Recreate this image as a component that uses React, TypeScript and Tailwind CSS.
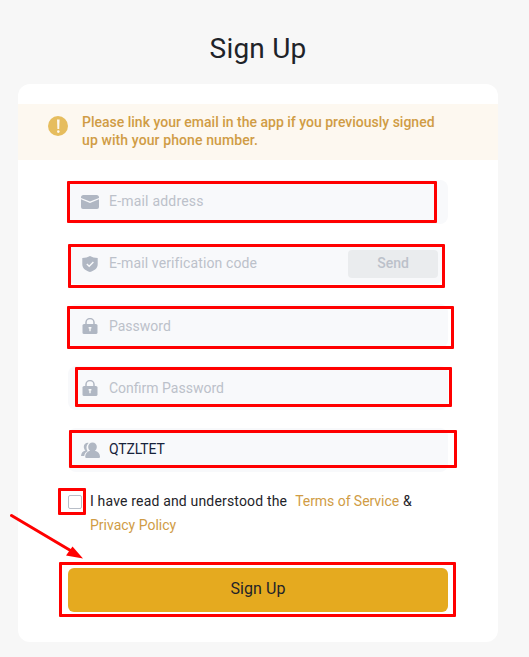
import React, { useState } from 'react';

type IconProps = { className?: string };

const MailIcon = ({ className }: IconProps) => (
  <svg viewBox="0 0 18 14" className={className} fill="currentColor">
    <path d="M2.500 0h13A2.500 2.500 0 0 1 18 2.500v.4L9 6.500 0 2.900v-.4A2.500 2.500 0 0 1 2.500 0z" />
    <path d="M0 4.300 9 7.900l9-3.600V12a2 2 0 0 1-2 2H2a2 2 0 0 1-2-2z" />
  </svg>
);

const ShieldIcon = ({ className }: IconProps) => (
  <svg viewBox="0 0 16 16" className={className} fill="currentColor">
    <path d="M8 0c2.200 1.300 4.600 1.900 7.700 2v6.200c0 4-3.400 6.500-7.700 7.800C3.700 14.700.3 12.200.3 8.200V2C3.400 1.900 5.800 1.300 8 0z" />
    <path d="m4.800 8 2.400 2.300 4.200-4.200" fill="none" stroke="#f8f9fb" strokeWidth="1.400" />
  </svg>
);

const LockIcon = ({ className }: IconProps) => (
  <svg viewBox="0 0 16 16" className={className} fill="currentColor">
    <path d="M4 7V4.600a4 4 0 0 1 8 0V7" fill="none" stroke="currentColor" strokeWidth="1.500" />
    <rect x="0.500" y="6" width="15" height="10" rx="1.600" />
    <path d="M8 9v4.300M6.600 9.800h2.800" fill="none" stroke="#f8f9fb" strokeWidth="1.400" />
  </svg>
);

const UsersIcon = ({ className }: IconProps) => (
  <svg viewBox="0 0 20 17" className={className} fill="currentColor">
    <path d="M7.500.9C4.700.6 2.700 2.600 2.800 5c.1 1.600.7 2.800 1.700 3.500C1.800 9.200.2 10.900 0 14h3.200c.3-2.200 1.500-3.800 3.400-4.700C4.900 6.500 5 3.200 7.500.9z" />
    <path d="M11.500.4a4.300 4.300 0 0 1 4.300 4.400c0 1.800-.7 3.200-1.900 4 3 .8 5 2.700 5.100 5.700 0 1-.5 1.600-1.500 1.600H5.700c-1 0-1.500-.6-1.500-1.600.1-3 2-4.900 4.900-5.700-1.200-.8-1.900-2.200-1.900-4A4.300 4.300 0 0 1 11.500.4z" />
  </svg>
);

const NoticeIcon = ({ className }: IconProps) => (
  <svg viewBox="0 0 20 20" className={className}>
    <circle cx="10" cy="10" r="10" fill="#e6bd5e" />
    <path d="M9 3.500h2.600l-.4 9.500H9.400z" fill="#fdf8f0" />
    <circle cx="10.300" cy="15.600" r="1.300" fill="#fdf8f0" />
  </svg>
);

interface FieldProps {
  icon: React.ReactNode;
  children: React.ReactNode;
  action?: React.ReactNode;
  mark: string;
  size?: string;
}

// red frame drawn over a control
const Mark = ({ className }: { className: string }) => (
  <span className={`absolute pointer-events-none rounded-[1px] border-3 border-[#ff0000] ${className}`} />
);

const Field = ({ icon, children, action, mark, size = 'h-11 pr-2.5' }: FieldProps) => (
  <div className={`relative flex items-center rounded-lg bg-[#f8f9fb] pl-3 ${size}`}>
    <div className="flex w-[29px] shrink-0 items-center justify-center pr-[9px] text-[#b0b7c3]">{icon}</div>
    <div className="flex-1 whitespace-nowrap">{children}</div>
    {action}
    <Mark className={mark} />
  </div>
);

export default function App() {
  const [agreed, setAgreed] = useState(false);

  return (
    <div className="h-[657px] w-[529px] overflow-hidden bg-[#f7f7f7] pl-[18px] font-['Roboto',sans-serif] text-sm text-[#1e2329]">
      <div className="relative w-[480px]">
        <h1 className="flex h-[84px] items-center justify-center pt-3.5 text-[28px] font-normal tracking-[0.2px]">
          Sign Up
        </h1>

        <div className="h-[558px] rounded-xl bg-white pt-5">
          <div className="flex h-14 bg-[#fdf8f0] pl-[30px] pt-[9px] text-[#d09c45]">
            <NoticeIcon className="mr-3.5 mt-[3px] h-5 w-5" />
            <p className="whitespace-nowrap font-medium leading-[18px]">
              Please link your email in the app if you previously signed
              <br />
              <span className="tracking-[0.1px]">up with your phone number.</span>
            </p>
          </div>

          <div className="mt-5 flex flex-col gap-[18px] px-[50px] text-[#bcc1ca]">
            <Field icon={<MailIcon className="h-3.5 w-[18px]" />} mark="-left-px top-px h-[42px] w-[370px]">
              <span className="block pb-0.5 tracking-[0.2px]">E-mail address</span>
            </Field>
            <Field
              icon={<ShieldIcon className="h-4 w-4" />}
              mark="left-0 top-0 h-11 w-[377px]"
              size="my-0.5 mr-[5px] h-10 pr-[5px]"
              action={
                <button className="h-7 w-[90px] rounded bg-[#eaecee] pb-0.5 font-medium">Send</button>
              }
            >
              <span className="block pb-0.5 tracking-[0.12px]">E-mail verification code</span>
            </Field>
            <Field icon={<LockIcon className="h-4 w-4" />} mark="-left-px top-[2px] h-[43px] w-[387px]">
              <span>Password</span>
            </Field>
            <Field icon={<LockIcon className="h-4 w-4" />} mark="left-[7px] top-px h-10 w-[377px]">
              <span>Confirm Password</span>
            </Field>
            <Field icon={<UsersIcon className="ml-0.5 h-[17px] w-5 shrink-0" />} mark="left-px top-[2px] h-[38px] w-[388px]">
              <span className="block pb-0.5 tracking-[-0.1px] text-[#17233b]">QTZLTET</span>
            </Field>
          </div>

          <div className="mt-[17px] flex pl-[50px]">
            <button
              role="checkbox"
              aria-checked={agreed}
              onClick={() => setAgreed(!agreed)}
              className="relative mt-1.5 h-3.5 w-3.5 rounded-[2px] border border-[#b8bec8] bg-white"
            >
              <Mark className="-left-[11px] -top-2 h-[27px] w-7" />
            </button>
            <p className="ml-2 whitespace-nowrap leading-6">
              <span className="tracking-[0.17px]">I have read and understood the</span>
              <a className="ml-2 tracking-[-0.05px] text-[#d09c45]">Terms of Service</a>
              <span className="ml-1">&amp;</span>
              <br />
              <a className="text-[#d09c45]">Privacy Policy</a>
            </p>
          </div>

          <div className="relative mx-[50px] mt-[31px]">
            <button className="h-11 w-full rounded-md bg-[#e5aa1f] pb-0.5 text-base tracking-[0.1px]">Sign Up</button>
            <Mark className="-left-[9px] -top-1.5 h-[55px] w-[397px]" />
          </div>
        </div>

        {/* arrow towards the submit button */}
        <svg className="pointer-events-none absolute -left-2 top-[512px] h-12 w-[76px]" viewBox="10 512 76 48">
          <path d="M11.500 515.500 73 552" stroke="#ff0000" strokeWidth="3" strokeLinecap="round" />
          <path d="M83 558.500 66 555.500l6.500-9z" fill="#ff0000" />
        </svg>
      </div>
    </div>
  );
}
